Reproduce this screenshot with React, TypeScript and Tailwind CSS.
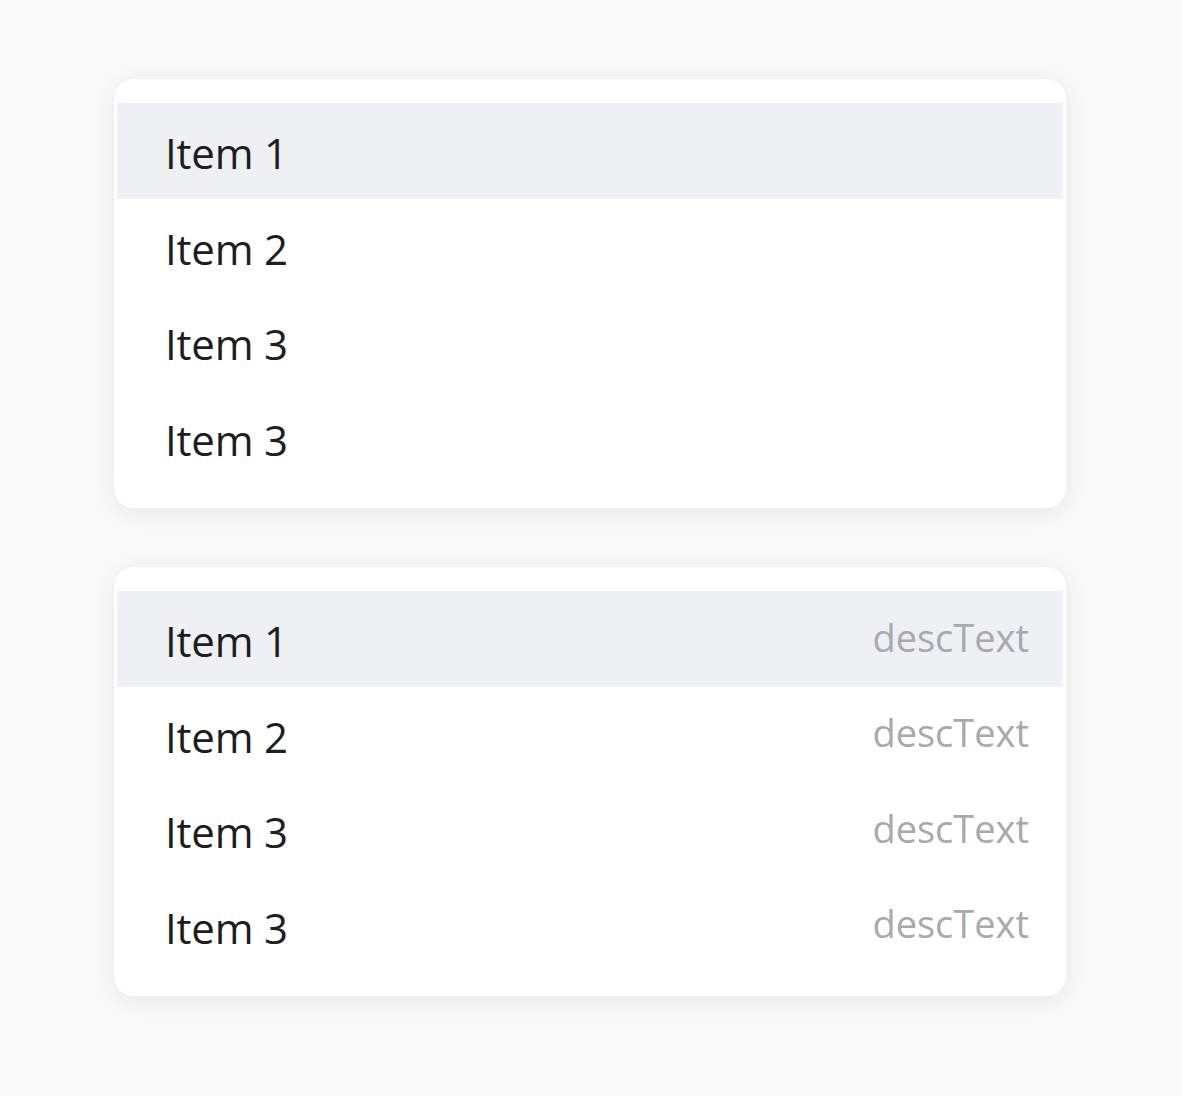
const items = ['Item 1', 'Item 2', 'Item 3', 'Item 3'];

function ListCard({ desc }: { desc?: boolean }) {
  return (
    <div className="rounded-[20px] bg-white px-[3px] pb-[23px] pt-[24px] shadow-[0_4px_26px_rgba(0,0,0,0.08)]">
      {items.map((label, i) => (
        <div
          key={i}
          className={
            'flex h-[95.5px] items-center justify-between pl-[48px] pr-[34px] ' +
            (i === 0 ? 'bg-[#eff0f4]' : '')
          }
        >
          <span className="mt-[5px] text-[42px] leading-none tracking-[-0.2px] text-[#1e1e1e]">{label}</span>
          {desc && <span className="-mt-[4px] text-[38px] leading-none text-[#a9a9ae]">descText</span>}
        </div>
      ))}
    </div>
  );
}

export default function App() {
  return (
    <div
      className="min-h-[1096px] bg-[#f9f9f9] pl-[114px] pr-[116px] pt-[79px]"
      style={{ fontFamily: '"Open Sans", "Noto Sans", sans-serif' }}
    >
      <div className="flex flex-col gap-[59px]">
        <ListCard />
        <ListCard desc />
      </div>
    </div>
  );
}
